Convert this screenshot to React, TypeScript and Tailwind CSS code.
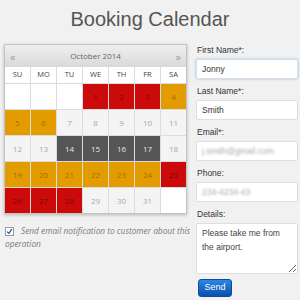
import React from 'react';

type Kind = 'empty' | 'red' | 'orange' | 'dark' | 'light';

const cellStyles: Record<Kind, string> = {
  empty: 'bg-white',
  red: 'bg-[#cc0a0a] text-[#800606]',
  orange: 'bg-[#e39c00] text-[#a66c00]',
  dark: 'bg-[#555555] text-[#e8e8e8]',
  light: 'bg-[#f4f4f4] text-[#a8a8a8]',
};

const kindOf = (d: number): Kind => {
  if ([1, 2, 3, 25, 26, 27, 28].includes(d)) return 'red';
  if ([4, 5, 6, 19, 20, 21, 22, 23, 24].includes(d)) return 'orange';
  if ([14, 15, 16, 17].includes(d)) return 'dark';
  return 'light';
};

const days = ['SU', 'MO', 'TU', 'WE', 'TH', 'FR', 'SA'];

const cells: { day: number | null; kind: Kind }[] = [
  ...[0, 1, 2].map(() => ({ day: null, kind: 'empty' as Kind })),
  ...Array.from({ length: 31 }, (_, i) => ({ day: i + 1, kind: kindOf(i + 1) })),
  { day: null, kind: 'empty' },
];

const Calendar: React.FC = () => (
  <div className="w-[183px] border border-[#c4c4c4] bg-[#dcdcdc] shadow-[0_1px_3px_rgba(0,0,0,0.25)] font-['Open_Sans',sans-serif]">
    {/* Month header */}
    <div className="h-[22px] flex items-center justify-between px-[5px] bg-gradient-to-b from-[#efefef] to-[#d9d9d9] text-[#666]">
      <span className="text-[11px] text-[#999] leading-none">«</span>
      <span className="text-[8px]">October 2014</span>
      <span className="text-[11px] text-[#999] leading-none">»</span>
    </div>
    <div className="grid grid-cols-7 gap-px">
      {days.map(d => (
        <div key={d} className="h-[16px] bg-white flex items-center justify-center text-[7.5px] text-[#444]">
          {d}
        </div>
      ))}
      {cells.map((c, idx) => (
        <div
          key={idx}
          className={`h-[25px] flex items-center justify-center text-[8px] ${cellStyles[c.kind]}`}
        >
          {c.day}
        </div>
      ))}
    </div>
  </div>
);

const Field: React.FC<{ label: string; children: React.ReactNode }> = ({ label, children }) => (
  <div className="mb-[5px]">
    <div className="h-[14px] leading-[14px] mb-[2px] pl-[1px] text-[8.5px] text-[#333]">{label}</div>
    {children}
  </div>
);

const inputBase = 'h-[20px] w-full bg-white border border-[#dedede] rounded-[2px] px-[5px] flex items-center text-[8.5px]';

const App: React.FC = () => {
  return (
    <div className="w-[300px] h-[300px] bg-[#f1f1f1] overflow-hidden">
      <h1 className="pt-[8px] h-[44px] text-center text-[20px] leading-[23px] text-[#555] font-['Liberation_Sans',Arial,sans-serif]">
        Booking Calendar
      </h1>

      <div className="flex pl-[4px]">
        {/* Left column */}
        <div className="w-[183px]">
          <Calendar />
          <p className="mt-[10px] pl-[1px] w-[190px] text-[8.3px] leading-[13px] italic text-[#7a7a7a] font-['Open_Sans',sans-serif]">
            <span className="inline-flex align-[-1px] mr-[7px] w-[9px] h-[9px] border border-[#9a9a9a] bg-white items-center justify-center">
              <svg viewBox="0 0 8 8" className="w-[7px] h-[7px]">
                <path d="M1.2 4.2 L3.2 6.2 L6.8 1.2" fill="none" stroke="#1e4fa8" strokeWidth="1.4" />
              </svg>
            </span>
            Send email notification to customer about this operation
          </p>
        </div>

        {/* Right column: form */}
        <div className="ml-[9px] w-[102px] -mt-[1px] font-['Liberation_Sans',Arial,sans-serif]">
          <Field label="First Name*:">
            <div className={`${inputBase} border-[#b9d3ee] shadow-[0_0_3px_rgba(82,168,236,0.6)] text-[#333]`}>Jonny</div>
          </Field>
          <Field label="Last Name*:">
            <div className={`${inputBase} text-[#333]`}>Smith</div>
          </Field>
          <Field label="Email*:">
            <div className={inputBase}>
              <span className="text-[#aaa] blur-[1px]">j.smith@gmail.com</span>
            </div>
          </Field>
          <Field label="Phone:">
            <div className={inputBase}>
              <span className="text-[#aaa] blur-[1px]">234-4234-43</span>
            </div>
          </Field>
          <Field label="Details:">
            <textarea
              readOnly
              value="Please take me from the airport."
              className="block w-full h-[51px] bg-white border border-[#dedede] rounded-[2px] px-[5px] py-[2px] text-[8.5px] leading-[14px] text-[#444] outline-none"
            />
          </Field>
          <button className="mt-[2px] ml-[2px] w-[34px] h-[18px] rounded-[3px] border border-[#0b4c9e] bg-gradient-to-b from-[#2f86e4] to-[#0a4fae] text-white text-[9px] flex items-center justify-center">
            Send
          </button>
        </div>
      </div>
    </div>
  );
};

export default App;
